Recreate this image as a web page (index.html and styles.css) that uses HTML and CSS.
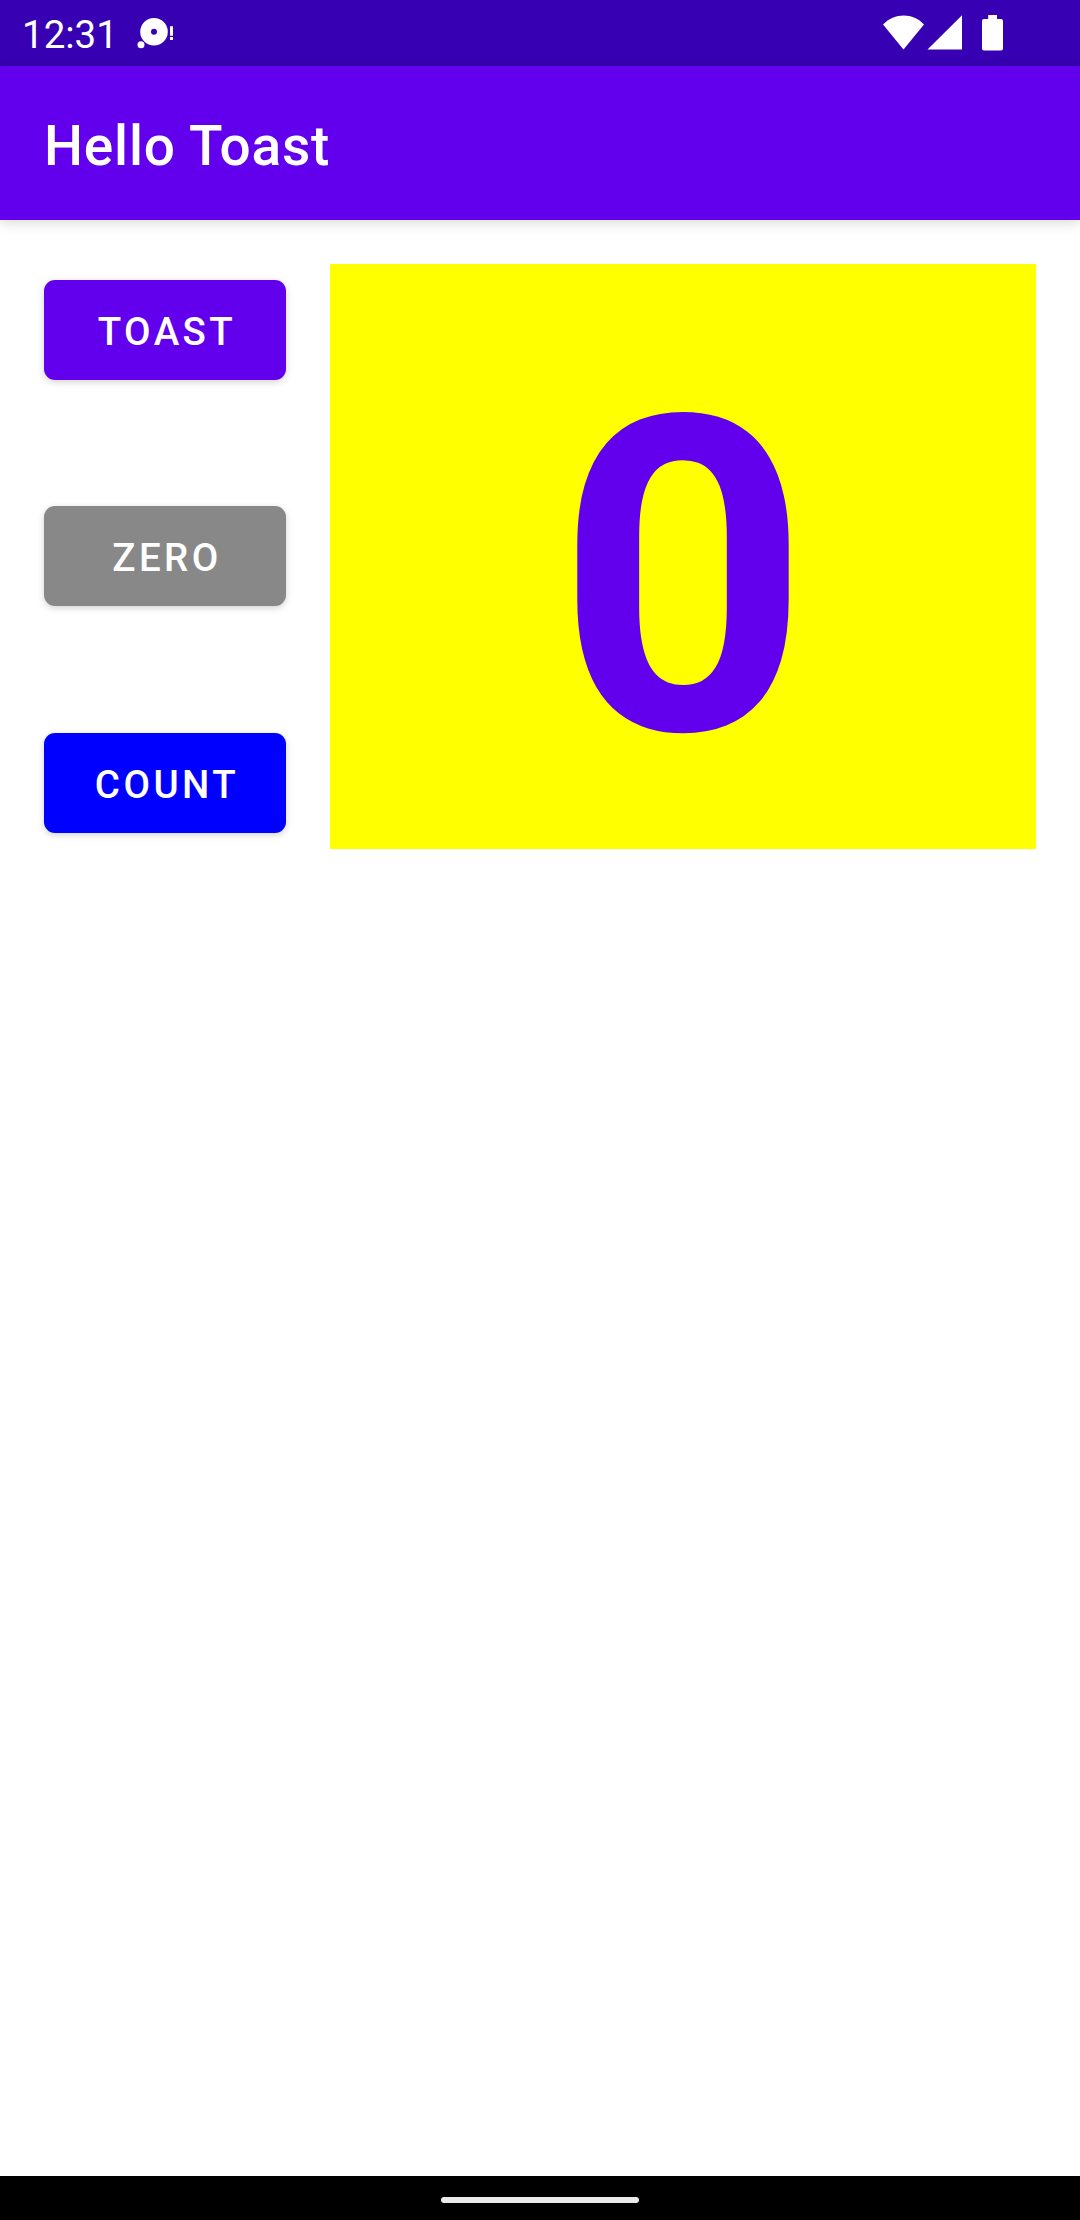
FILE: index.html
```html
<!DOCTYPE html>
<html lang="en">
<head>
<meta charset="utf-8">
<title>Hello Toast</title>
<link rel="stylesheet" href="styles.css">
</head>
<body>
<div class="screen">
  <header class="status">
    <span class="clock">12:31</span>
    <svg class="notice" width="38" height="34" viewBox="0 0 38 34" fill="#fff">
      <path fill-rule="evenodd" d="M17 1a13.8 13.8 0 1 0 0 27.6A13.8 13.8 0 1 0 17 1zm0 10.8a3 3 0 1 1 0 6 3 3 0 0 1 0-6z"/>
      <circle cx="4" cy="27.7" r="3.5"/>
      <path d="M33 9.3h3v9.4h-3zM33 20h3v3h-3z"/>
    </svg>
    <div class="system">
      <svg width="122" height="38" viewBox="0 0 122 38" fill="#fff">
        <path d="M0 10.5C11.5-1.5 30-1.5 41 10.5L20.5 35.5z"/>
        <path d="M44.5 35.5L79 1.3v34.2z"/>
        <path d="M105.2 1h8.8v4h4a2 2 0 0 1 2 2v27.6a2 2 0 0 1-2 2h-17a2 2 0 0 1-2-2V7a2 2 0 0 1 2-2h4.2z"/>
      </svg>
    </div>
  </header>
  <div class="appbar"><h1 class="title">Hello Toast</h1></div>
  <main class="content">
    <div class="actions">
      <button class="button toast">TOAST</button>
      <button class="button zero">ZERO</button>
      <button class="button count">COUNT</button>
    </div>
    <div class="counter">0</div>
  </main>
  <footer class="navbar"><div class="handle"></div></footer>
</div>
</body>
</html>
```
FILE: styles.css
```css
* { box-sizing: border-box; }
body { margin: 0; font-family: Roboto, sans-serif; background: #fff; }
.screen { display: flex; flex-direction: column; width: 1080px; height: 2220px; }
.status {
  display: flex; align-items: flex-start; height: 66px; padding: 0 75px 0 22px;
  background: #3700b3; color: #fff;
}
.clock { width: 115px; font-size: 38.5px; line-height: 69px; }
.notice { margin-top: 17px; }
.system { margin: 14px 0 0 auto; }
.system svg, .notice { display: block; }
.appbar {
  display: flex; align-items: center; height: 154px; padding: 6px 44px 0;
  background: #6200ee; color: #fff;
  box-shadow: 0 3px 12px rgba(0, 0, 0, .15);
}
.title { margin: 0; font-size: 55px; font-weight: 500; line-height: 64px; letter-spacing: .8px; }
.content { display: flex; flex: 1; align-items: flex-start; gap: 44px; padding: 44px; }
.actions {
  display: flex; flex-direction: column; gap: 126px;
  width: 242px; height: 585px; padding: 16px 0;
}
.button {
  height: 100px; padding: 2px 0 0 4px; border: 0; border-radius: 11px;
  color: #fff; font: 500 38.5px/45px Roboto, sans-serif; letter-spacing: 3.44px;
  box-shadow: 0 2px 7px rgba(0, 0, 0, .18);
}
.toast { background: #6200ee; }
.zero { background: #888; }
.count { margin-top: 1px; background: #00f; }
.counter {
  display: flex; flex: 1; align-items: center; justify-content: center;
  height: 585px; padding-top: 45px; background: #ff0; color: #6200ee;
  font-size: 440px; font-weight: 700; line-height: 516px;
}
.navbar {
  display: flex; align-items: center; justify-content: center;
  height: 44px; padding-top: 4px; background: #000;
}
.handle { width: 198px; height: 6px; border-radius: 3px; background: #ebebeb; }
```
